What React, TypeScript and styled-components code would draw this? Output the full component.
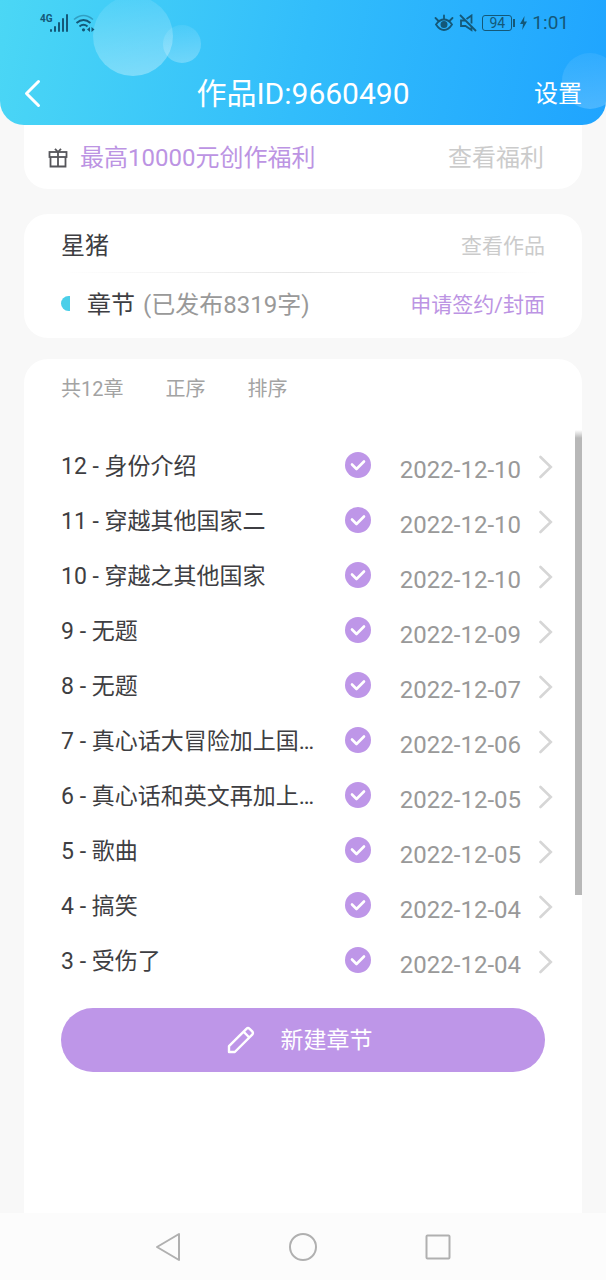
import React from "react";
import styled, { createGlobalStyle } from "styled-components";

const GlobalStyle = createGlobalStyle`
  *, *::before, *::after { box-sizing: border-box; }
  body {
    margin: 0;
    background: #f8f8f8;
    font-family: Roboto, "Noto Sans CJK SC", sans-serif;
    color: #3e3e42;
  }
  button { font: inherit; border: 0; padding: 0; background: none; cursor: pointer; }
  a { color: inherit; text-decoration: none; }
  svg { display: block; flex: none; }
`;

const Screen = styled.div`
  display: flex;
  flex-direction: column;
  min-height: 100vh;
`;

const Header = styled.header`
  position: relative;
  overflow: hidden;
  border-radius: 0 0 24px 24px;
  background: linear-gradient(102deg, #4bd7f5 0%, #32bdfb 50%, #1fa4ff 100%);
  color: #fff;
`;

const Bubble = styled.span<{ $size: number; $top: number; $left?: number; $right?: number; $strength: number }>`
  position: absolute;
  top: ${(p) => p.$top}px;
  ${(p) => (p.$left !== undefined ? `left: ${p.$left}px;` : `right: ${p.$right}px;`)}
  width: ${(p) => p.$size}px;
  height: ${(p) => p.$size}px;
  border-radius: 50%;
  background: linear-gradient(170deg, rgba(255, 255, 255, 0.06), rgba(255, 255, 255, ${(p) => p.$strength}));
`;

const StatusBar = styled.div`
  position: relative;
  display: flex;
  align-items: center;
  justify-content: space-between;
  height: 46px;
  padding: 0 37px 0 40px;
  color: #145878;
`;

const StatusGroup = styled.div<{ $gap: number }>`
  display: flex;
  align-items: center;
  gap: ${(p) => p.$gap}px;
`;

const NetworkLabel = styled.span`
  align-self: flex-start;
  width: 10px;
  font-family: "Liberation Sans Narrow", Roboto, sans-serif;
  font-size: 10px;
  line-height: 10px;
  font-weight: 700;
`;

const Battery = styled.span`
  display: flex;
  align-items: center;
  gap: 1px;
  &::after {
    content: "";
    width: 2px;
    height: 8px;
    background: currentColor;
  }
`;

const BatteryLevel = styled.span`
  width: 30px;
  border: 1px solid currentColor;
  border-radius: 3px;
  font-size: 14px;
  line-height: 14px;
  text-align: center;
`;

const Clock = styled.time`
  font-size: 19px;
  line-height: 24px;
`;

const TitleBar = styled.div`
  position: relative;
  display: grid;
  grid-template-columns: 1fr auto 1fr;
  align-items: center;
  height: 79px;
  padding: 16px 24px 0;
`;

const BackButton = styled.button`
  justify-self: start;
  color: #fff;
`;

const Title = styled.h1`
  margin: 0;
  font-size: 30px;
  line-height: 36px;
  font-weight: 400;
`;

const SettingsButton = styled.button`
  justify-self: end;
  font-size: 24px;
  line-height: 32px;
  color: #fff;
`;

const Content = styled.main`
  display: flex;
  flex-direction: column;
  flex: 1;
  margin: 0 24px;
`;

const Card = styled.section`
  background: #fff;
  border-radius: 24px;
`;

const BenefitCard = styled(Card)`
  display: flex;
  align-items: center;
  height: 64px;
  padding: 2px 38px 0 24px;
  border-radius: 0 0 24px 24px;
`;

const BenefitText = styled.span`
  flex: 1;
  margin-left: 12px;
  font-size: 24px;
  line-height: 32px;
  color: #bc94e3;
`;

const WorkCard = styled(Card)`
  margin-top: 25px;
  padding: 0 37px 1px;
`;

const WorkRow = styled.div`
  display: flex;
  align-items: center;
  height: 64px;
`;

const Divider = styled.hr`
  height: 1px;
  margin: -6px 0 0;
  border: 0;
  background: linear-gradient(90deg, transparent, #e6e6e6, transparent);
`;

const WorkName = styled.h2`
  margin: 0;
  font-size: 24px;
  line-height: 32px;
  font-weight: 400;
`;

const HalfDot = styled.span`
  width: 9px;
  height: 15px;
  margin: 0 17px 3px 0;
  border-radius: 8px 0 0 8px;
  background: #4bcfe9;
`;

const WordCount = styled.span`
  margin-left: 8px;
  font-size: 24px;
  line-height: 32px;
  color: #999;
`;

const TextLink = styled.a<{ $tone: "muted" | "accent"; $size: number }>`
  margin-left: auto;
  font-size: ${(p) => p.$size}px;
  line-height: 32px;
  color: ${(p) => (p.$tone === "accent" ? "#bc94e3" : "#cbcbcb")};
`;

const ChapterCard = styled(Card)`
  flex: 1;
  margin-top: 21px;
  border-radius: 24px 24px 0 0;
`;

const Toolbar = styled.div`
  display: flex;
  align-items: center;
  gap: 42px;
  height: 71px;
  padding: 0 37px 12px;
  font-size: 20px;
  line-height: 28px;
  color: #a3a3a3;
`;

const ToolButton = styled.button`
  color: inherit;
`;

const ListArea = styled.div`
  display: flex;
`;

const ChapterList = styled.ul`
  flex: 1;
  min-width: 0;
  margin: 0;
  padding: 7px 22px 0 37px;
  list-style: none;
`;

const ScrollThumb = styled.div`
  width: 7px;
  height: 465px;
  background: linear-gradient(#fff, #b8b8b8 8px);
`;

const ChapterLink = styled.a`
  display: flex;
  align-items: center;
  height: 55px;
`;

const ChapterName = styled.span`
  flex: 1;
  min-width: 0;
  overflow: hidden;
  margin-right: 24px;
  padding-top: 4px;
  font-size: 23px;
  line-height: 32px;
  white-space: nowrap;
  text-overflow: ellipsis;
`;

const ChapterDate = styled.time`
  margin: 0 18px 0 29px;
  padding-top: 10px;
  font-size: 24px;
  line-height: 32px;
  color: #999;
`;

const ChevronBox = styled.span`
  padding-top: 4px;
  color: #d6d6d6;
`;

const CreateButton = styled.button`
  display: flex;
  align-items: center;
  justify-content: center;
  gap: 26px;
  width: calc(100% - 74px);
  height: 64px;
  margin: 21px 37px 20px;
  padding-right: 7px;
  border-radius: 32px;
  background: #be96e8;
  color: #fff;
  font-size: 23px;
  line-height: 32px;
`;

const CreateLabel = styled.span`
  padding-top: 2px;
`;

const SystemNav = styled.nav`
  display: grid;
  grid-template-columns: repeat(3, 1fr);
  justify-items: center;
  align-items: center;
  height: 67px;
  padding: 0 100px;
  background: #fcfcfc;
  color: #b0b0b0;
`;

const NavButton = styled.button`
  color: inherit;
`;

const SignalIcon = () => (
  <svg width="18" height="18" viewBox="0 0 18 18" fill="currentColor" aria-hidden="true">
    <rect x="0" y="15" width="2" height="3" rx="1" />
    <rect x="4" y="12" width="2" height="6" rx="1" />
    <rect x="8" y="8" width="2" height="10" rx="1" />
    <rect x="12" y="4" width="2" height="14" rx="1" />
    <rect x="16" y="0" width="2" height="18" rx="1" />
  </svg>
);

const WifiIcon = () => (
  <svg width="22" height="18" viewBox="0 0 22 18" fill="none" stroke="currentColor" strokeWidth="2" aria-hidden="true">
    <path d="M1 5.5Q10.500-2.500 20 5.500" opacity="0.4" strokeWidth="1.600" />
    <path d="M3.500 9Q10.500 3 17.500 9" />
    <path d="M6.500 12.500Q10.500 9 14.500 12.500" />
    <circle cx="10.500" cy="15.800" r="1.600" fill="currentColor" stroke="none" />
    <path d="M17 13v5l-3-2.500zM18.500 13v5l3-2.500z" fill="currentColor" stroke="none" />
  </svg>
);

const EyeIcon = () => (
  <svg width="20" height="18" viewBox="0 0 20 18" fill="none" stroke="currentColor" strokeWidth="1.800" strokeLinecap="round" aria-hidden="true">
    <path d="M2 10.500Q5.500 5.500 10 5.500T18 10.500Q14.500 16 10 16T2 10.500Z" />
    <circle cx="10" cy="10.500" r="2.600" fill="currentColor" />
    <path d="M10 5V1.500M4.500 7L1.500 4M15.500 7l3-3" />
  </svg>
);

const MuteIcon = () => (
  <svg width="18" height="18" viewBox="0 0 18 18" fill="none" stroke="currentColor" strokeWidth="1.800" aria-hidden="true">
    <path d="M1 1l16 16" />
    <path d="M7.500 5L12.500 1.500V9.500M12.500 12.500V16L6.500 12H2V6.500H6" />
  </svg>
);

const BoltIcon = () => (
  <svg width="7" height="14" viewBox="0 0 7 14" fill="currentColor" aria-hidden="true">
    <path d="M4.500 0L0 8h3l-.8 6L7 5.500H4z" />
  </svg>
);

const BackIcon = () => (
  <svg width="18" height="30" viewBox="0 0 18 30" fill="none" stroke="currentColor" strokeWidth="3" strokeLinecap="round" strokeLinejoin="round" aria-hidden="true">
    <path d="M14.500 2.500L2.500 14.500l12 12" />
  </svg>
);

const GiftIcon = () => (
  <svg width="20" height="21" viewBox="0 0 20 21" fill="none" stroke="#55555a" strokeWidth="1.800" aria-hidden="true">
    <rect x="1.500" y="4" width="17" height="5" />
    <path d="M2.500 9V18.500H17.500V9M10 4V18.500M10 4L7 .8M10 4L13 .8" />
  </svg>
);

const CheckIcon = () => (
  <svg width="26" height="26" viewBox="0 0 26 26" role="img" aria-label="已发布">
    <circle cx="13" cy="13" r="13" fill="#be96e8" />
    <path d="M7 12.500l4.500 4.500 7.500-7.500" fill="none" stroke="#fff" strokeWidth="2.600" strokeLinecap="round" strokeLinejoin="round" />
  </svg>
);

const ChevronIcon = () => (
  <svg width="14" height="24" viewBox="0 0 14 24" fill="none" stroke="currentColor" strokeWidth="2.600" strokeLinecap="round" aria-hidden="true">
    <path d="M1.500 2l10.300 10L1.500 22" />
  </svg>
);

const PencilIcon = () => (
  <svg width="28" height="28" viewBox="0 0 28 28" fill="none" stroke="currentColor" strokeWidth="2.400" strokeLinejoin="round" aria-hidden="true">
    <path d="M2 26V20.200L19.400 2.800Q21 1.400 22.600 2.800L25.200 5.400Q26.600 7 25.200 8.600L7.800 26Z" />
    <path d="M16.500 5.700l5.800 5.800" />
  </svg>
);

const chapters = [
  { no: 12, name: "身份介绍", date: "2022-12-10" },
  { no: 11, name: "穿越其他国家二", date: "2022-12-10" },
  { no: 10, name: "穿越之其他国家", date: "2022-12-10" },
  { no: 9, name: "无题", date: "2022-12-09" },
  { no: 8, name: "无题", date: "2022-12-07" },
  { no: 7, name: "真心话大冒险加上国…", date: "2022-12-06" },
  { no: 6, name: "真心话和英文再加上…", date: "2022-12-05" },
  { no: 5, name: "歌曲", date: "2022-12-05" },
  { no: 4, name: "搞笑", date: "2022-12-04" },
  { no: 3, name: "受伤了", date: "2022-12-04" },
];

export default function App() {
  return (
    <Screen>
      <GlobalStyle />
      <Header>
        <Bubble $size={80} $top={-4} $left={93} $strength={0.34} />
        <Bubble $size={38} $top={25} $left={163} $strength={0.28} />
        <Bubble $size={56} $top={53} $right={-12} $strength={0.2} />
        <StatusBar>
          <StatusGroup $gap={5}>
            <StatusGroup $gap={0}>
              <NetworkLabel>4G</NetworkLabel>
              <SignalIcon />
            </StatusGroup>
            <WifiIcon />
          </StatusGroup>
          <StatusGroup $gap={5}>
            <EyeIcon />
            <MuteIcon />
            <Battery>
              <BatteryLevel>94</BatteryLevel>
            </Battery>
            <BoltIcon />
            <Clock>1:01</Clock>
          </StatusGroup>
        </StatusBar>
        <TitleBar>
          <BackButton aria-label="返回">
            <BackIcon />
          </BackButton>
          <Title>作品ID:9660490</Title>
          <SettingsButton>设置</SettingsButton>
        </TitleBar>
      </Header>

      <Content>
        <BenefitCard>
          <GiftIcon />
          <BenefitText>最高10000元创作福利</BenefitText>
          <TextLink href="#benefits" $tone="muted" $size={24}>查看福利</TextLink>
        </BenefitCard>

        <WorkCard>
          <WorkRow>
            <WorkName>星猪</WorkName>
            <TextLink href="#work" $tone="muted" $size={21}>查看作品</TextLink>
          </WorkRow>
          <Divider />
          <WorkRow>
            <HalfDot />
            <WorkName>章节</WorkName>
            <WordCount>(已发布8319字)</WordCount>
            <TextLink href="#contract" $tone="accent" $size={21}>申请签约/封面</TextLink>
          </WorkRow>
        </WorkCard>

        <ChapterCard>
          <Toolbar>
            <span>共12章</span>
            <ToolButton>正序</ToolButton>
            <ToolButton>排序</ToolButton>
          </Toolbar>
          <ListArea>
            <ChapterList>
              {chapters.map((c) => (
                <li key={c.no}>
                  <ChapterLink href={`#chapter-${c.no}`}>
                    <ChapterName>{`${c.no} - ${c.name}`}</ChapterName>
                    <CheckIcon />
                    <ChapterDate>{c.date}</ChapterDate>
                    <ChevronBox>
                      <ChevronIcon />
                    </ChevronBox>
                  </ChapterLink>
                </li>
              ))}
            </ChapterList>
            <ScrollThumb />
          </ListArea>
          <CreateButton>
            <PencilIcon />
            <CreateLabel>新建章节</CreateLabel>
          </CreateButton>
        </ChapterCard>
      </Content>

      <SystemNav aria-label="系统导航">
        <NavButton aria-label="返回">
          <svg width="28" height="30" viewBox="0 0 28 30" fill="none" stroke="currentColor" strokeWidth="2" strokeLinejoin="round">
            <path d="M25 2V28L3 15Z" />
          </svg>
        </NavButton>
        <NavButton aria-label="主页">
          <svg width="30" height="30" viewBox="0 0 30 30" fill="none" stroke="currentColor" strokeWidth="2">
            <circle cx="15" cy="15" r="13" />
          </svg>
        </NavButton>
        <NavButton aria-label="最近任务">
          <svg width="26" height="26" viewBox="0 0 26 26" fill="none" stroke="currentColor" strokeWidth="2">
            <rect x="1.500" y="1.500" width="23" height="23" rx="1" />
          </svg>
        </NavButton>
      </SystemNav>
    </Screen>
  );
}
